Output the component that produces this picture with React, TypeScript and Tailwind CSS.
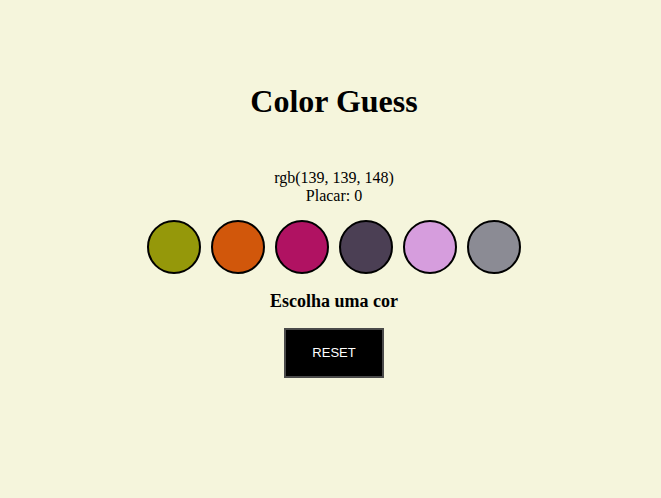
const colors = ['#95980a', '#d1570b', '#b01262', '#4b3f54', '#d69ddd', '#8b8b94'];

export default function App() {
  return (
    <div className="min-h-screen w-full bg-[#f5f5dc] font-['Liberation_Serif',serif] text-black flex flex-col items-center pt-[83px] pl-[7px]">
      <h1 className="text-[32px] leading-[37px] font-bold">Color Guess</h1>

      <div className="mt-[49px] text-center text-base leading-[18px]">
        <p>rgb(139, 139, 148)</p>
        <p>Placar: 0</p>
      </div>

      <div className="mt-[15px] flex gap-[10px]">
        {colors.map((c) => (
          <button
            key={c}
            className="w-[54px] h-[54px] rounded-full border-2 border-black"
            style={{ backgroundColor: c }}
          />
        ))}
      </div>

      <h3 className="mt-[16px] text-[18px] leading-[22px] font-bold">Escolha uma cor</h3>

      <button className="mt-[16px] w-[100px] h-[50px] bg-black border-2 border-[#4a4a4a] text-white text-[13px] font-['Liberation_Sans',sans-serif]">
        RESET
      </button>
    </div>
  );
}
